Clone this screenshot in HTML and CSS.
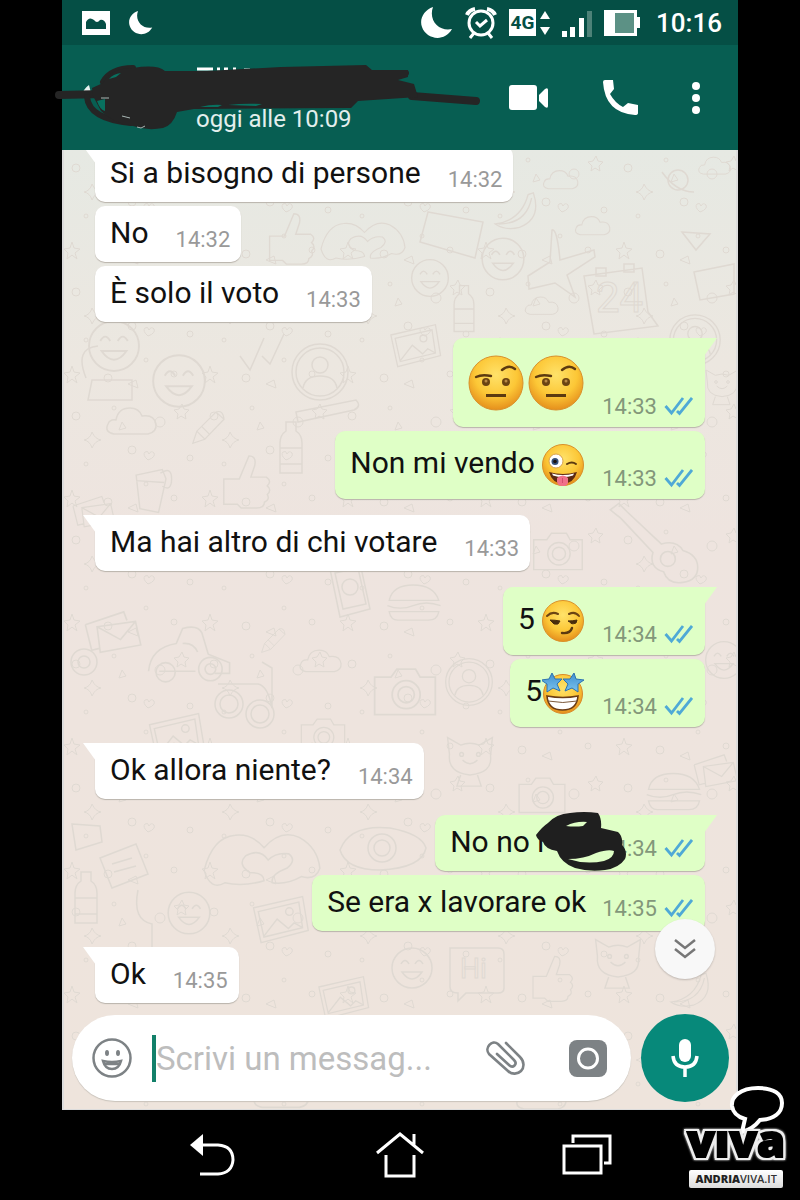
FILE: index.html
```html
<!DOCTYPE html>
<html lang="it">
<head>
    <meta charset="UTF-8">
    <meta name="viewport" content="width=device-width, initial-scale=1">
    <title>Chat</title>
    <link rel="stylesheet" href="styles.css">
</head>
<body>
    <!-- shared shapes -->
    <svg class="defs" width="0" height="0" aria-hidden="true">
        <defs>
            <radialGradient id="face" cx="50%" cy="35%" r="65%">
                <stop offset="0" stop-color="#ffe26a"/>
                <stop offset="0.6" stop-color="#fcc736"/>
                <stop offset="1" stop-color="#e58f1c"/>
            </radialGradient>
            <linearGradient id="star" x1="0" y1="0" x2="0" y2="1">
                <stop offset="0" stop-color="#3f8fd0"/>
                <stop offset="1" stop-color="#7cc4ee"/>
            </linearGradient>
            <symbol id="ticks" viewBox="0 0 29 20">
                <path d="M1.500 10l6 7L19 2M13 15l2.500 2.500L28 2" fill="none" stroke="#4fa9d6" stroke-width="2.800"/>
            </symbol>
            <symbol id="moon" viewBox="0 0 32 32">
                <path d="M12 0C3 3-2 12 1 20c4 12 22 16 30 2C19 25 7 14 12 0z" fill="#fff"/>
            </symbol>
            <symbol id="eyebrow" viewBox="0 0 56 56">
                <circle cx="28" cy="28" r="27" fill="url(#face)" stroke="#d9902a"/>
                <path d="M8 22q6-3 15-1" fill="none" stroke="#5c3a10" stroke-width="2.400" stroke-linecap="round"/>
                <path d="M34 15q7-6 13-1" fill="none" stroke="#5c3a10" stroke-width="2.400" stroke-linecap="round"/>
                <circle cx="18" cy="27" r="4" fill="#6b4413"/><circle cx="38" cy="27" r="4" fill="#6b4413"/>
                <circle cx="18" cy="26" r="1.500" fill="#b98a45"/><circle cx="38" cy="26" r="1.500" fill="#b98a45"/>
                <path d="M18 40.500h20" stroke="#5c3a10" stroke-width="3"/>
            </symbol>
            <symbol id="zany" viewBox="0 0 42 42">
                <circle cx="21" cy="21" r="20.500" fill="url(#face)" stroke="#d9902a"/>
                <circle cx="14" cy="17" r="7" fill="#fff" stroke="#d9a24a"/>
                <circle cx="13" cy="17.500" r="3.500" fill="#35507a"/><circle cx="13" cy="17.500" r="1.800" fill="#1c1410"/>
                <path d="M25 20q5-3 9 0" fill="none" stroke="#5c3a10" stroke-width="2" stroke-linecap="round"/>
                <path d="M7 28q14 4 28 0-3 11-14 12Q10 39 7 28z" fill="#5d2a12"/>
                <path d="M10 29.500q11 3 22 0l-1 2q-10 3-20 0z" fill="#fff"/>
                <path d="M15 34q6-5 11 0v5q-2 4-6 3-4 0-5-4z" fill="#f0708a"/>
                <path d="M20.500 34v5" stroke="#d24f6e"/>
            </symbol>
            <symbol id="smirk" viewBox="0 0 42 42">
                <circle cx="21" cy="21" r="20.500" fill="url(#face)" stroke="#d9902a"/>
                <path d="M5 16q5-5 11-2M27 14q6-3 10 2" fill="none" stroke="#6b4413" stroke-width="2" stroke-linecap="round"/>
                <path d="M8 20q5 0 10 1l-2 3q-5 1-6-2zM26 21q5 0 9-1l-1 3q-5 2-6-1z" fill="#4a2d0c" stroke="#4a2d0c"/>
                <path d="M20 33q8 1 10-5" fill="none" stroke="#5c3a10" stroke-width="2.400" stroke-linecap="round"/>
            </symbol>
            <symbol id="starstruck" viewBox="0 0 42 42">
                <circle cx="21" cy="22" r="19.500" fill="url(#face)" stroke="#d98a2a"/>
                <path d="M5 24q16 3 31 0-1 14-15.500 14T5 24z" fill="#fff" stroke="#6a3c16" stroke-width="1.600"/>
                <path d="M6 29q15 3 29 0" fill="none" stroke="#7c5a3c"/>
                <path d="M10 1l3 6 7 0-5 5 3 7-7-3-6 4 0-8-6-4 8-1z" fill="url(#star)" stroke="#2c72b0"/>
                <path d="M32 1l2 6 8 1-6 4 0 8-6-4-7 3 3-7-5-5 7 0z" fill="url(#star)" stroke="#2c72b0"/>
            </symbol>
            <!-- small marks scattered between the big doodles -->
            <pattern id="specks" width="138" height="124" patternUnits="userSpaceOnUse">
                <circle cx="14" cy="18" r="4"/><circle cx="52" cy="10" r="2"/><circle cx="98" cy="24" r="5"/>
                <circle cx="128" cy="60" r="3"/><circle cx="70" cy="52" r="4"/><circle cx="24" cy="66" r="2"/>
                <circle cx="46" cy="104" r="4"/><circle cx="112" cy="100" r="3"/><circle cx="84" cy="86" r="2"/>
                <path d="M30 34q3 7 9 8-6 1-9 8-2-7-8-8 6-1 8-8z"/>
                <path d="M120 6l2 5 5 1-4 4 1 5-5-3-4 3 1-5-4-4 5-1z"/>
                <path d="M86 62q-6-5-3-8 3-2 4 2 2-4 5-1 2 4-6 7z"/>
                <path d="M10 92l2 6 6 1-5 4 2 6-5-4-5 4 1-6-4-4 6-1z"/>
                <path d="M66 110l8-4 2 8zM60 24l4 6-7 2z"/>
            </pattern>
            <symbol id="d-face" viewBox="0 0 48 48"><circle cx="24" cy="24" r="20"/><path d="M14 28q10 14 20 0zM13 20q4-7 8 0M27 20q4-7 8 0"/></symbol>
            <symbol id="d-cloud" viewBox="0 0 60 40"><path d="M12 34q-10-2-6-10 2-5 8-4 2-12 14-12 9 0 12 8 12-2 14 8 1 8-8 10z"/></symbol>
            <symbol id="d-person" viewBox="0 0 60 60"><circle cx="30" cy="30" r="28"/><circle cx="30" cy="30" r="24"/><circle cx="30" cy="23" r="8"/><path d="M13 46q2-12 17-12t17 12"/></symbol>
            <symbol id="d-mail" viewBox="0 0 60 50"><path d="M5 20l36-12 3 8M5 20l6 24 8-2M16 22l36-5 5 22-38 7zM16 22l22 12 14-17"/></symbol>
            <symbol id="d-photo" viewBox="0 0 70 60"><path d="M8 16l52-12 6 36-50 13zM13 20l43-10 4 27-41 10zM19 46l14-18 12 10 6-6 9 5"/><circle cx="46" cy="20" r="4"/></symbol>
            <symbol id="d-pencil" viewBox="0 0 50 50"><path d="M6 44l5-15L35 5l10 9-24 25zM11 29l10 10M35 5q9-3 10 9M17 23l10 10"/></symbol>
            <symbol id="d-car" viewBox="0 0 90 60"><path d="M8 48q2-22 26-26l6-14q14-4 18 4l6 20 20 8v10H70M18 48h34M40 22q10-1 14 8"/><circle cx="24" cy="49" r="9"/><circle cx="66" cy="46" r="11"/><circle cx="66" cy="46" r="5"/></symbol>
            <symbol id="d-phone" viewBox="0 0 50 60"><path d="M6 8l30-6 10 46-30 8zM11 12l23-5 8 36-23 5z"/><circle cx="26" cy="26" r="8"/></symbol>
            <symbol id="d-guitar" viewBox="0 0 90 80"><path d="M4 8l8-6 8 8 32 30q14-4 20 6 14 4 14 16 0 12-14 14-14 2-18-10-14-4-10-18L14 16z"/><circle cx="58" cy="54" r="7"/></symbol>
            <symbol id="d-cam" viewBox="0 0 60 50"><path d="M4 14h14l5-7h16l4 7h13v32H4z"/><circle cx="31" cy="29" r="12"/><circle cx="31" cy="29" r="7"/></symbol>
            <symbol id="d-thumb" viewBox="0 0 60 60"><path d="M6 28h16l10-24q8 0 6 10l-4 12h16q6 4 1 9 5 4 0 9 3 5-3 8 0 6-8 6H24l-4-4H6z"/></symbol>
            <symbol id="d-hands" viewBox="0 0 120 60"><path d="M4 42Q12 10 34 8q16-2 28 12Q78 2 96 10q18 10 20 30-4 12-18 8-14 8-28 6-2-8 14-14 10-8 2-14-12-2-20 6-8-12-22-4-8 8 4 16 14 0 14 8-20 6-38 2-14 8-20-12z"/></symbol>
            <symbol id="d-cup" viewBox="0 0 50 60"><path d="M8 14l28-6 4 10-8 36-20-4zM8 20l30 2M34 12q12-8 12 6t-10 8"/></symbol>
            <symbol id="d-burger" viewBox="0 0 70 50"><path d="M6 22Q10 4 34 4t30 18zM4 28q15 6 30 0t32 0M6 35h58q-2 10-12 10H16q-8 0-10-10z"/></symbol>
            <symbol id="d-cat" viewBox="0 0 60 60"><path d="M8 24L6 6l14 8q10-4 20 0L54 6l-2 20q2 18-22 20Q6 44 8 24zM22 30q8 8 16 0M20 46l-4 12h26l-4-12"/><circle cx="21" cy="24" r="2"/><circle cx="39" cy="24" r="2"/></symbol>
            <symbol id="d-bottle" viewBox="0 0 30 60"><path d="M10 4h10v9q6 4 6 12v30H4V25q0-8 6-12zM4 30h22M4 46h22"/></symbol>
            <symbol id="d-banana" viewBox="0 0 60 50"><path d="M50 4q10 30-16 40-16 4-28-4 30-4 38-34zM10 40Q42 40 48 10"/></symbol>
        </defs>
    </svg>

    <div class="phone">
        <div class="status-bar">
            <svg width="28" height="24" viewBox="0 0 28 24"><path d="M0 0h28v24H0z" fill="#fff"/><path d="M4 18v-7q3-6 8-2 3 4 6 0 4-1 6 4v5z" fill="#054f45"/></svg>
            <svg width="24" height="26"><use href="#moon"/></svg>
            <div class="status-right">
                <svg width="32" height="32"><use href="#moon"/></svg>
                <svg width="32" height="32" viewBox="0 0 32 32" fill="none" stroke="#fff" stroke-width="3">
                    <circle cx="16" cy="16" r="12"/><path d="M11 15l4 4 7-6M9 26l-4 5M23 26l4 5"/><path d="M2 8q2-5 8-6M30 8q-2-5-8-6" stroke-width="4"/>
                </svg>
                <div class="network">
                    <span>4G</span>
                    <svg width="10" height="24" viewBox="0 0 10 24"><path d="M0 8l5-8 5 8zM0 16h10l-5 8z" fill="#fff"/></svg>
                </div>
                <svg width="30" height="28" viewBox="0 0 30 28" fill="#fff"><path d="M0 22h5v6H0zM8 18h5v10H8zM17 9h5v19h-5z"/><path d="M25 2h5v26h-5z" fill="#4d8278"/></svg>
                <svg width="36" height="26" viewBox="0 0 36 26"><path d="M0 0h33v7h3v11h-3v8H0z" fill="#fff"/><path d="M11 3h19v20H11z" fill="#5c9185"/></svg>
                <span class="clock">10:16</span>
            </div>
        </div>

        <header class="chat-header">
            <!-- blacked out avatar and contact name -->
            <svg class="scribble" width="430" height="80" viewBox="50 60 430 80" aria-hidden="true">
                <path d="M197 69h16M217 69h3M224 69h4M233 69h3M244 70h6" stroke="#fff" stroke-width="3"/>
                <path d="M82 96q1-7 7-11l2 8z" fill="#e8f2f0"/>
                <g fill="none" stroke="#252525" stroke-linecap="round">
                    <path d="M59 95l45-1" stroke-width="8"/>
                    <path d="M103 82q8-14 30-14M87 97q2 22 44 26" stroke-width="6"/>
                    <path d="M390 73h16" stroke-width="6"/>
                    <path d="M412 96l64 5" stroke-width="8"/>
                </g>
                <path d="M92 88l11-5q8-15 30-15 24-4 32 3l42 0 74-4 85-2 6 5 36 0 0 7-10 3 16 4 4 13-60 4-7 7-157 1-17 3q-4 13-14 16-16 3-30-2-20-3-32-15l-8-15z" fill="#252525"/>
                <path d="M97 101l8-2v12q-5-1-8-10zM109 79q4-5 12-6l-5 4zM200 107q12-3 22-2l-4 2zM228 105q16-2 34-1l-6 2z" fill="#08705f"/>
                <path d="M137 127l4 1 4-2M122 116l8 2M101 98h8" fill="none" stroke="#a9b8b5"/>
            </svg>
            <p class="last-seen">oggi alle 10:09</p>
            <div class="header-actions">
                <button type="button" aria-label="Videochiamata"><svg width="40" height="26" viewBox="0 0 40 26" fill="#fff"><rect width="28" height="25" rx="3"/><path d="M30 10l6-6q3-2 3 1v16q0 3-3 1l-6-6z"/></svg></button>
                <button type="button" aria-label="Chiama"><svg width="35" height="35" viewBox="0 0 35 35" fill="#fff"><path d="M0 2q0-2 2-2h8l1 9-4 5q5 9 13 13l5-4 10 2v8q0 2-3 2Q2 33 0 2z"/></svg></button>
                <button type="button" aria-label="Altro"><svg width="8" height="32" viewBox="0 0 8 32" fill="#fff"><circle cx="4" cy="4" r="4"/><circle cx="4" cy="16" r="4"/><circle cx="4" cy="28" r="4"/></svg></button>
            </div>
        </header>

        <main class="chat">
            <svg class="wallpaper" viewBox="0 0 676 959" preserveAspectRatio="xMidYMin slice" aria-hidden="true">
                <rect width="676" height="959" fill="url(#specks)" stroke="none"/>
                <use href="#d-cloud" x="478" y="12" width="42" height="34"/>
                <use href="#d-cloud" x="510" y="60" width="42" height="30"/>
                <use href="#d-cloud" x="630" y="2" width="46" height="26"/>
                <use href="#d-banana" x="428" y="36" width="52" height="50"/>
                <use href="#d-face" x="416" y="84" width="50" height="50"/>
                <use href="#d-face" x="346" y="106" width="44" height="44"/>
                <path d="M366 62l55 10-8 36-55-16zM466 126l22-14 2-32q5-2 8 30l34-10 1 7-28 18 8 22-20-14-26 6z"/>
                <path d="M522 126l58-8 6 44 10 14-64 8zM534 118v8h10v-8zM562 114v8h10v-8z"/>
                <text x="534" y="162">24</text>
                <circle cx="616" cy="30" r="10"/><path d="M600 22q14 20 32 20M620 82l28 2-14 16zM632 122l40-8v30l-34 6z"/>
                <use href="#d-bottle" x="384" y="132" width="36" height="54"/>
                <use href="#d-cloud" x="460" y="140" width="40" height="30"/>
                <use href="#d-person" x="606" y="160" width="54" height="60"/>
                <use href="#d-thumb" x="200" y="60" width="60" height="56"/>
                <use href="#d-hands" x="256" y="60" width="90" height="60"/>
                <use href="#d-face" x="22" y="166" width="60" height="60"/>
                <use href="#d-person" x="228" y="192" width="60" height="60"/>
                <use href="#d-face" x="86" y="200" width="62" height="62"/>
                <path d="M24 228q-12-30 12-32M26 250h44v-20H30zM178 206l10 14 14-32M200 206l8 8 14-30M234 262l60-12q6 6-2 10l-56 12z"/>
                <use href="#d-pencil" x="126" y="254" width="40" height="48"/>
                <use href="#d-cloud" x="40" y="248" width="60" height="44"/>
                <use href="#d-photo" x="322" y="166" width="60" height="62"/>
                <use href="#d-bottle" x="212" y="268" width="34" height="60"/>
                <use href="#d-cup" x="60" y="312" width="60" height="56"/>
                <use href="#d-thumb" x="156" y="298" width="58" height="66"/>
                <use href="#d-mail" x="6" y="340" width="50" height="40"/>
                <use href="#d-cat" x="640" y="206" width="40" height="60"/>
                <use href="#d-mail" x="18" y="450" width="64" height="60"/>
                <use href="#d-car" x="78" y="464" width="96" height="76"/>
                <use href="#d-phone" x="262" y="410" width="50" height="62"/>
                <use href="#d-pencil" x="196" y="468" width="30" height="46"/>
                <use href="#d-cloud" x="234" y="490" width="50" height="40"/>
                <use href="#d-burger" x="322" y="430" width="60" height="46"/>
                <use href="#d-guitar" x="544" y="350" width="96" height="88"/>
                <use href="#d-cam" x="468" y="370" width="56" height="60"/>
                <use href="#d-cam" x="308" y="510" width="70" height="60"/>
                <use href="#d-person" x="382" y="504" width="50" height="56"/>
                <use href="#d-cam" x="236" y="562" width="50" height="44"/>
                <circle cx="22" cy="512" r="13"/><circle cx="22" cy="512" r="6"/>
                <circle cx="167" cy="554" r="14"/><circle cx="167" cy="554" r="9"/><circle cx="198" cy="564" r="14"/><circle cx="198" cy="564" r="9"/><path d="M156 534h40q10 2 14 24v-40l-10-6"/>
                <use href="#d-photo" x="80" y="558" width="66" height="60"/>
                <use href="#d-cat" x="380" y="580" width="56" height="60"/>
                <use href="#d-face" x="640" y="480" width="44" height="60"/>
                <use href="#d-mail" x="628" y="594" width="50" height="50"/>
                <use href="#d-burger" x="580" y="620" width="64" height="44"/>
                <use href="#d-cam" x="450" y="622" width="60" height="44"/>
                <use href="#d-hands" x="138" y="676" width="124" height="64"/>
                <path d="M278 700q10-26 50-22 32 6 36 20-4 20-46 22-34 0-40-20z"/><circle cx="320" cy="698" r="14"/><circle cx="320" cy="698" r="8"/>
                <path d="M38 708l36-14 12 30-36 14zM50 714l20-6M52 722l22-6M10 674l28 2 2 16-26 8z"/>
                <use href="#d-bottle" x="8" y="718" width="32" height="60"/>
                <use href="#d-face" x="102" y="738" width="50" height="50"/>
                <use href="#d-photo" x="184" y="738" width="66" height="66"/>
                <path d="M76 740q-6 30 14 34v24"/>
                <use href="#d-face" x="326" y="794" width="48" height="48"/>
                <path d="M388 798h48q6 0 6 6v34q0 5-6 5h-32l-8 8v-8q-8 0-8-6z"/>
                <text class="hi" x="398" y="828">Hi</text>
                <use href="#d-cat" x="528" y="780" width="56" height="64"/>
                <use href="#d-thumb" x="466" y="800" width="50" height="56"/>
                <use href="#d-banana" x="600" y="820" width="56" height="40"/>
                <use href="#d-photo" x="250" y="822" width="60" height="54"/>
                <use href="#d-cloud" x="180" y="920" width="80" height="44"/>
                <use href="#d-cloud" x="440" y="925" width="80" height="40"/>
            </svg>

            <div class="messages">
                <div class="msg in tail"><p>Si a bisogno di persone</p><time>14:32</time></div>
                <div class="msg in"><p>No</p><time>14:32</time></div>
                <div class="msg in"><p>È solo il voto</p><time>14:33</time></div>

                <div class="msg out tail big-emoji">
                    <p><svg width="56" height="56" role="img" aria-label="🤨"><use href="#eyebrow"/></svg><svg width="56" height="56" role="img" aria-label="🤨"><use href="#eyebrow"/></svg></p>
                    <time>14:33</time><svg class="ticks"><use href="#ticks"/></svg>
                </div>
                <div class="msg out emoji">
                    <p>Non mi vendo <svg width="42" height="42" role="img" aria-label="🤪"><use href="#zany"/></svg></p>
                    <time>14:33</time><svg class="ticks"><use href="#ticks"/></svg>
                </div>

                <div class="msg in tail"><p>Ma hai altro di chi votare</p><time>14:33</time></div>

                <div class="msg out tail emoji">
                    <p>5 <svg width="42" height="42" role="img" aria-label="😏"><use href="#smirk"/></svg></p>
                    <time>14:34</time><svg class="ticks"><use href="#ticks"/></svg>
                </div>
                <div class="msg out emoji">
                    <p>5<svg width="42" height="42" role="img" aria-label="🤩"><use href="#starstruck"/></svg></p>
                    <time>14:34</time><svg class="ticks"><use href="#ticks"/></svg>
                </div>

                <div class="msg in tail"><p>Ok allora niente?</p><time>14:34</time></div>

                <div class="msg out tail">
                    <p class="redacted">No no r</p>
                    <time>14:34</time><svg class="ticks"><use href="#ticks"/></svg>
                    <svg class="blot" width="92" height="60" viewBox="536 812 92 60" aria-hidden="true">
                        <path fill="#1f1f1f" d="M537 835q6-8 12-12 8-9 22-10 14-2 28 0 4 6 3 15l17 4q5 4 4 13 6 6 3 14-6 9-20 11-16 2-30-2-14-5-18-17-12-2-14-9-6-2-7-7z"/>
                        <path fill="#dfffc6" d="M567 826q10-5 21-4l-4 4q-8 1-17 0z"/>
                        <path fill="#dfffc6" d="M569 859q16 0 28-6 12-4 18-2 0 7-10 10-18 4-36-2z"/>
                    </svg>
                </div>
                <div class="msg out"><p>Se era x lavorare ok</p><time>14:35</time><svg class="ticks"><use href="#ticks"/></svg></div>

                <div class="msg in tail"><p>Ok</p><time>14:35</time></div>
            </div>

            <button type="button" class="scroll-down" aria-label="Vai in fondo">
                <svg width="22" height="20" viewBox="0 0 22 20" fill="none" stroke="#777" stroke-width="2.500"><path d="M1 1l10 8 10-8M1 10l10 8 10-8"/></svg>
            </button>

            <form class="composer">
                <div class="composer-box">
                    <button type="button" aria-label="Emoji">
                        <svg width="40" height="40" viewBox="0 0 40 40" fill="none" stroke="#7d8285" stroke-width="2.500"><circle cx="20" cy="20" r="18.500"/><path d="M11 23q9 2 18 0-2 8-9 8t-9-8z"/><path d="M12 26h16"/><ellipse cx="15" cy="15" rx="2" ry="3" fill="#7d8285" stroke="none"/><ellipse cx="26" cy="15" rx="2" ry="3" fill="#7d8285" stroke="none"/></svg>
                    </button>
                    <span class="caret"></span>
                    <input type="text" placeholder="Scrivi un messag..." aria-label="Scrivi un messaggio">
                    <button type="button" aria-label="Allega">
                        <svg width="40" height="36" viewBox="0 0 40 36" fill="none" stroke="#7d8285" stroke-width="2.600" stroke-linecap="round"><path d="M21 3l14 14c5 5 4 11 1 14s-9 4-13 0L4 14C-1 8 7-1 13 4l16 16c4 4-1 9-5 5L12 14"/></svg>
                    </button>
                    <button type="button" aria-label="Fotocamera">
                        <svg width="38" height="37" viewBox="0 0 38 37"><rect width="38" height="37" rx="8" fill="#7d8285"/><circle cx="19" cy="18.500" r="9.500" fill="none" stroke="#fff" stroke-width="3"/></svg>
                    </button>
                </div>
                <button type="button" class="mic" aria-label="Messaggio vocale">
                    <svg width="28" height="38" viewBox="0 0 28 38"><rect x="8" width="12" height="23" rx="6" fill="#fff"/><path d="M2 17q1 11 12 11t12-11M14 28v10" fill="none" stroke="#fff" stroke-width="3.500"/></svg>
                </button>
            </form>
        </main>

        <nav class="nav-bar">
            <button type="button" aria-label="Indietro"><svg width="46" height="44" viewBox="0 0 46 44"><path d="M0 12L13 1v22z" fill="#fff"/><path d="M12 12h16q15 1 15 15-1 13-15 14H10" fill="none" stroke="#fff" stroke-width="3"/></svg></button>
            <button type="button" aria-label="Home"><svg width="48" height="48" viewBox="0 0 48 48" fill="none" stroke="#fff" stroke-width="3"><path d="M1 22L24 3l23 19M38 3v12M10 24v21h28V24"/></svg></button>
            <button type="button" aria-label="Recenti"><svg width="50" height="42" viewBox="0 0 50 42" fill="none" stroke="#fff" stroke-width="3"><path d="M2 12h37v27H2zM11 9V2h37v27h-6"/></svg></button>
        </nav>
    </div>

    <div class="watermark">
        <svg class="bubble" width="56" height="48" viewBox="0 0 56 48">
            <path d="M29 2C11 2 2 11 3 20c1 7 6 11 13 13l-3 13c8-2 14-7 18-12 14-1 22-7 22-17C53 8 45 2 29 2z" fill="#000" stroke="#fff" stroke-width="4"/>
        </svg>
        <strong>vıva</strong>
        <span><b>ANDRIA</b>VIVA.IT</span>
    </div>
</body>
</html>
```
FILE: styles.css
```css
* {
    box-sizing: border-box;
}
body {
    margin: 0;
    background-color: #000;
    font-family: Roboto, "Liberation Sans", sans-serif;
    position: relative;
}
p {
    margin: 0;
}
svg {
    display: block;
    flex-shrink: 0;
}
button {
    padding: 0;
    border: none;
    background: none;
    cursor: pointer;
}
.defs {
    position: absolute;
}
.phone {
    display: flex;
    flex-direction: column;
    min-height: 100vh;
    margin: 0 62px;
}

/* top bars */
.status-bar {
    display: flex;
    align-items: center;
    gap: 19px;
    height: 45px;
    padding: 0 16px 0 20px;
    background-color: #054f45;
    color: #fff;
}
.status-right {
    display: flex;
    align-items: center;
    gap: 12px;
    margin-left: auto;
}
.network {
    display: flex;
    align-items: center;
    gap: 4px;
}
.network span {
    width: 27px;
    background-color: #fff;
    color: #054f45;
    font-size: 19px;
    font-weight: bold;
    line-height: 27px;
    text-align: center;
}
.clock {
    padding-left: 4px;
    font-size: 26px;
    font-weight: 500;
    line-height: 32px;
}
.chat-header {
    position: relative;
    display: flex;
    align-items: center;
    justify-content: space-between;
    height: 105px;
    padding: 0 38px 0 134px;
    background-color: #075e52;
    color: #fff;
}
.scribble {
    position: absolute;
    left: -12px;
    top: 15px;
}
.last-seen {
    padding-top: 42px;
    color: #e3efed;
    font-size: 24px;
    line-height: 28px;
}
.header-actions {
    display: flex;
    align-items: center;
    gap: 54px;
}

/* conversation */
.chat {
    position: relative;
    flex: 1;
    display: flex;
    flex-direction: column;
    justify-content: space-between;
    overflow: hidden;
    border: solid #dcdcdc;
    border-width: 0 2px 1px;
    background: linear-gradient(#e6e9e3, #ece7e0 22%, #eee4df 40%, #eee4dc);
}
.wallpaper {
    position: absolute;
    left: 0;
    top: 0;
    width: 100%;
    height: 100%;
    fill: none;
    stroke: #dfd9d2;
    stroke-width: 1.5px;
}
pattern {
    stroke: #dfd9d2;
    fill: none;
}
.wallpaper text {
    font-size: 42px;
    stroke-width: 1px;
}
.wallpaper .hi {
    font-size: 28px;
}
.messages {
    position: relative;
    display: flex;
    flex-direction: column;
    gap: 4px;
    margin-top: -4px;
    padding: 0 31px;
}
.msg {
    position: relative;
    display: flex;
    align-items: flex-end;
    padding: 7px 12px 9px 15px;
    border-radius: 10px;
    box-shadow: 0 1px 1px #b9b3ab;
    color: #111;
}
.msg p {
    font-size: 30px;
    line-height: 40px;
    white-space: nowrap;
}
.msg time {
    color: #999;
    font-size: 22px;
    line-height: 26px;
}
.in {
    align-self: flex-start;
    gap: 27px;
    padding-right: 11px;
    background-color: #fff;
}
.out {
    align-self: flex-end;
    gap: 7px;
    background-color: #dfffc6;
}
.out p {
    margin-right: 9px;
}
.out time {
    color: #83977a;
}
.out + .in, .in + .out {
    margin-top: 12px;
}
.tail::before {
    content: "";
    position: absolute;
    top: 0;
    width: 13px;
    height: 18px;
    background-color: inherit;
}
.in.tail {
    border-top-left-radius: 0;
}
.in.tail::before {
    left: -12px;
    clip-path: polygon(0 0, 100% 0, 100% 100%);
}
.out.tail {
    border-top-right-radius: 0;
}
.out.tail::before {
    right: -12px;
    clip-path: polygon(0 0, 100% 0, 0 100%);
}
.ticks {
    width: 29px;
    height: 20px;
    margin-bottom: 4px;
}
.emoji, .big-emoji {
    padding-bottom: 7px;
}
.out.emoji p, .out.big-emoji p {
    margin-right: 11px;
}
.emoji p {
    height: 54px;
    line-height: 50px;
}
.emoji p svg {
    display: inline-block;
    vertical-align: middle;
}
.big-emoji p {
    display: flex;
    align-items: center;
    gap: 4px;
    height: 75px;
}
.redacted {
    width: 136px;
}
.blot {
    position: absolute;
    right: 78px;
    top: -3px;
}
.scroll-down {
    position: absolute;
    right: 21px;
    bottom: 130px;
    display: flex;
    align-items: center;
    justify-content: center;
    width: 60px;
    height: 60px;
    border-radius: 50%;
    background-color: #f8f8f8;
    box-shadow: 0 1px 2px rgba(0,0,0,0.2);
}

/* message box */
.composer {
    position: relative;
    display: flex;
    align-items: center;
    gap: 10px;
    padding: 0 7px 7px 8px;
}
.composer-box {
    flex: 1;
    display: flex;
    align-items: center;
    min-width: 0;
    height: 86px;
    padding: 0 24px 0 20px;
    border-radius: 43px;
    background-color: #fff;
    box-shadow: 0 1px 1px #c9c3bb;
}
.caret {
    width: 4px;
    height: 47px;
    margin-left: 20px;
    background-color: #128069;
}
.composer input {
    flex: 1;
    min-width: 0;
    padding: 0;
    border: none;
    outline: none;
    background: none;
    font-family: inherit;
    font-size: 33px;
}
.composer input::placeholder {
    color: #bdbdbd;
}
.composer-box button + button {
    margin-left: 44px;
}
.mic {
    display: flex;
    align-items: center;
    justify-content: center;
    width: 88px;
    height: 88px;
    border-radius: 50%;
    background-color: #07897a;
}

/* system buttons */
.nav-bar {
    display: grid;
    grid-template-columns: repeat(3, 1fr);
    height: 90px;
    padding: 0 58px;
}
.nav-bar button {
    display: flex;
    align-items: center;
    justify-content: center;
}

.watermark {
    position: absolute;
    right: 15px;
    bottom: 12px;
    display: flex;
    flex-direction: column;
    align-items: center;
    font-family: "Open Sans", sans-serif;
}
.watermark .bubble {
    position: absolute;
    right: 0;
    bottom: 54px;
}
.watermark strong {
    color: #000;
    font-size: 45px;
    font-weight: 800;
    line-height: 60px;
    -webkit-text-stroke: 2px #000;
    filter: drop-shadow(2px 0 #eee) drop-shadow(-2px 0 #eee) drop-shadow(0 2px #eee) drop-shadow(0 -2px #eee) drop-shadow(0 0 1px #fff);
}
.watermark span {
    padding: 0 6px;
    border-radius: 2px;
    background: linear-gradient(#fff, #dcdcdc);
    color: #333;
    font-size: 11px;
    font-weight: 600;
    line-height: 18px;
}
.watermark b {
    font-weight: 800;
    color: #222;
}
```
